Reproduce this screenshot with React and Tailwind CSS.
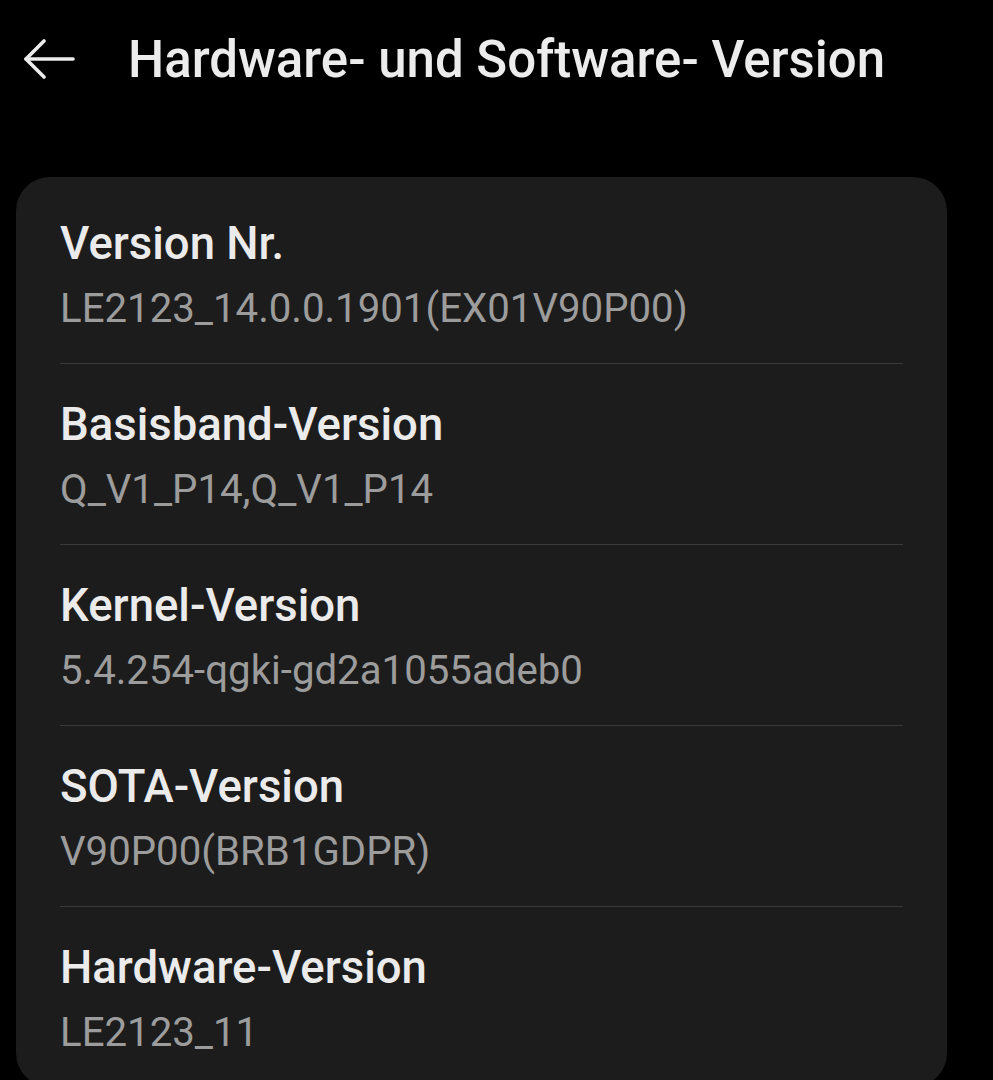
import React from 'react';

const items = [
  { label: 'Version Nr.', value: 'LE2123_14.0.0.1901(EX01V90P00)' },
  { label: 'Basisband-Version', value: 'Q_V1_P14,Q_V1_P14' },
  { label: 'Kernel-Version', value: '5.4.254-qgki-gd2a1055adeb0' },
  { label: 'SOTA-Version', value: 'V90P00(BRB1GDPR)' },
  { label: 'Hardware-Version', value: 'LE2123_11' },
];

const BackArrow = () => (
  <svg width="52" height="40" viewBox="0 0 52 40" fill="none" stroke="#ececec" strokeWidth="3.6" strokeLinecap="round" strokeLinejoin="round">
    <path d="M50 20 H3" />
    <path d="M21 2 L3 20 L21 38" />
  </svg>
);

const App = () => {
  return (
    <div className="min-h-screen bg-black font-['Roboto','Liberation_Sans',sans-serif] overflow-hidden">
      <header className="h-[118px] flex items-center pl-[23px]">
        <BackArrow />
        <h1 className="ml-[53px] mt-px text-[51px] leading-[60px] font-medium text-[#ececec] whitespace-nowrap">
          Hardware- und Software- Version
        </h1>
      </header>

      <div className="mt-[59px] mx-[16px] w-[931px] bg-[#1c1c1c] rounded-[34px] px-[44px] pt-[6px]">
        {items.map((item, i) => (
          <div key={item.label}>
            <div className="pt-[33px] pb-[29px]">
              <div className="text-[45.5px] leading-[56px] font-medium text-[#ebebeb] whitespace-nowrap">{item.label}</div>
              <div className="mt-[12px] text-[40.2px] leading-[50px] text-[#9c9c9c] whitespace-nowrap">{item.value}</div>
            </div>
            {i < items.length - 1 && <div className="h-px bg-[#3a3a3a]" />}
          </div>
        ))}
      </div>
    </div>
  );
};

export default App;
